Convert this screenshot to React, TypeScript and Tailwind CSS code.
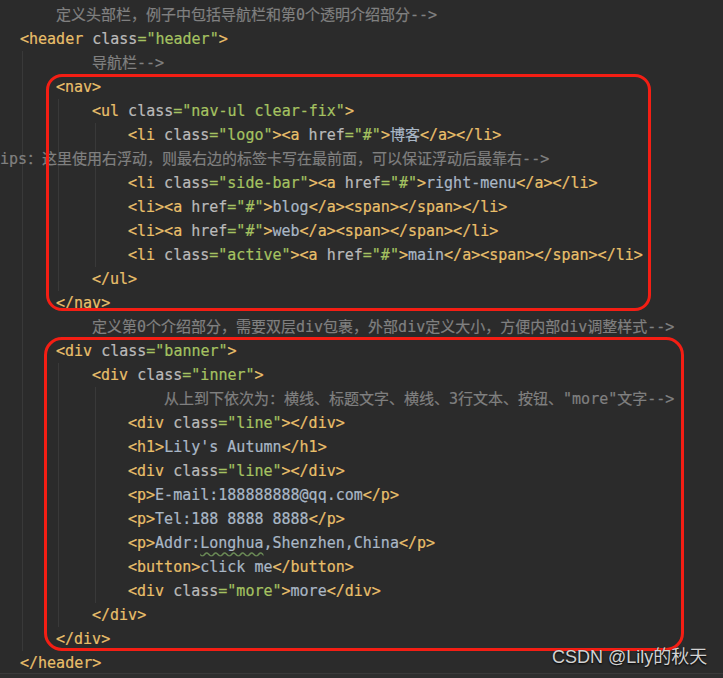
import { ReactNode } from "react";

type Tok = [string, string];

const tokClass: Record<string, string> = {
  t: "text-[#e8bf6a]",
  a: "text-[#bababa]",
  v: "text-[#a5c261]",
  x: "text-[#a9b7c6]",
  c: "text-[#808080]",
  w: "text-[#a9b7c6] underline decoration-wavy decoration-[#6a8a55] underline-offset-[3px]",
};

// one editor row; pad is the left padding inside the current guide block
const L = ({ pad, toks }: { pad: string; toks: Tok[] }) => (
  <div className={`h-[24px] leading-[24px] whitespace-pre ${pad}`}>
    {toks.map(([kind, text], i) => (
      <span key={i} className={tokClass[kind]}>
        {text}
      </span>
    ))}
  </div>
);

// indent guide: a block whose left border is the guide line
const Guide = ({ ml, children }: { ml: string; children: ReactNode }) => (
  <div className={`flex flex-col border-l border-[#393939] ${ml}`}>{children}</div>
);

const liLink = (cls: string | null, text: string, tail: string): Tok[] => [
  ...(cls ? ([["t", "<li"], ["a", " class"], ["v", `="${cls}"`], ["t", "><a"]] as Tok[]) : ([["t", "<li><a"]] as Tok[])),
  ["a", " href"],
  ["v", '="#"'],
  ["t", ">"],
  ["x", text],
  ["t", tail],
];

const divClass = (cls: string, tail: string): Tok[] => [
  ["t", "<div"],
  ["a", " class"],
  ["v", `="${cls}"`],
  ["t", tail],
];

export default function App() {
  return (
    <div className="w-[723px] h-[678px] flex flex-col bg-[#2b2b2b] overflow-hidden">
      <div className="relative h-[673px] overflow-hidden pt-[3px] font-['DejaVu_Sans_Mono','Noto_Sans_CJK_SC',monospace] text-[15px] [-webkit-text-stroke:0.2px]">
        <L pad="pl-[56px]" toks={[["c", "定义头部栏，例子中包括导航栏和第0个透明介绍部分-->"]]} />
        <L pad="pl-[20px]" toks={[["t", "<header"], ["a", " class"], ["v", '="header"'], ["t", ">"]]} />
        <Guide ml="ml-[22px]">
          <L pad="pl-[69px]" toks={[["c", "导航栏-->"]]} />
          <L pad="pl-[33px]" toks={[["t", "<nav>"]]} />
          <Guide ml="ml-[35px]">
            <L pad="pl-[33px]" toks={[["t", "<ul"], ["a", " class"], ["v", '="nav-ul clear-fix"'], ["t", ">"]]} />
            <Guide ml="ml-[36px]">
              <L pad="pl-[32px]" toks={liLink("logo", "博客", "</a></li>")} />
              <div className="relative -ml-[96px]">
                <L pad="pl-0" toks={[["c", "ips：这里使用右浮动，则最右边的标签卡写在最前面，可以保证浮动后最靠右-->"]]} />
              </div>
              <L pad="pl-[32px]" toks={liLink("side-bar", "right-menu", "</a></li>")} />
              <L pad="pl-[32px]" toks={liLink(null, "blog", "</a><span></span></li>")} />
              <L pad="pl-[32px]" toks={liLink(null, "web", "</a><span></span></li>")} />
              <L pad="pl-[32px]" toks={liLink("active", "main", "</a><span></span></li>")} />
            </Guide>
            <L pad="pl-[33px]" toks={[["t", "</ul>"]]} />
          </Guide>
          <L pad="pl-[33px]" toks={[["t", "</nav>"]]} />
          <L pad="pl-[69px]" toks={[["c", "定义第0个介绍部分，需要双层div包裹，外部div定义大小，方便内部div调整样式-->"]]} />
          <L pad="pl-[33px]" toks={divClass("banner", ">")} />
          <Guide ml="ml-[35px]">
            <L pad="pl-[33px]" toks={divClass("inner", ">")} />
            <Guide ml="ml-[36px]">
              <L pad="pl-[68px]" toks={[["c", '从上到下依次为：横线、标题文字、横线、3行文本、按钮、"more"文字-->']]} />
              <L pad="pl-[32px]" toks={divClass("line", "></div>")} />
              <L pad="pl-[32px]" toks={[["t", "<h1>"], ["x", "Lily's Autumn"], ["t", "</h1>"]]} />
              <L pad="pl-[32px]" toks={divClass("line", "></div>")} />
              <L pad="pl-[32px]" toks={[["t", "<p>"], ["x", "E-mail:188888888@qq.com"], ["t", "</p>"]]} />
              <L pad="pl-[32px]" toks={[["t", "<p>"], ["x", "Tel:188 8888 8888"], ["t", "</p>"]]} />
              <L
                pad="pl-[32px]"
                toks={[["t", "<p>"], ["x", "Addr:"], ["w", "Longhua"], ["x", ",Shenzhen,China"], ["t", "</p>"]]}
              />
              <L pad="pl-[32px]" toks={[["t", "<button>"], ["x", "click me"], ["t", "</button>"]]} />
              <L pad="pl-[32px]" toks={[...divClass("more", ">"), ["x", "more"], ["t", "</div>"]]} />
            </Guide>
            <L pad="pl-[33px]" toks={[["t", "</div>"]]} />
          </Guide>
          <L pad="pl-[33px]" toks={[["t", "</div>"]]} />
        </Guide>
        <L pad="pl-[20px]" toks={[["t", "</header>"]]} />

        {/* hand drawn highlight boxes over the code */}
        <div className="absolute left-[46px] top-[74px] w-[605px] h-[237px] border-[3px] border-[#f41e14] rounded-[16px]" />
        <div className="absolute left-[44px] top-[337px] w-[640px] h-[314px] border-[3px] border-[#f41e14] rounded-[18px]" />

        <div className="absolute left-[552px] top-[647px] leading-[20px] text-[18px] text-[#d2d2d2] font-['Liberation_Sans','Noto_Sans_CJK_SC',sans-serif] [-webkit-text-stroke:0px] [text-shadow:0_1px_2px_#000]">
          CSDN @Lily的秋天
        </div>
      </div>
      <div className="flex-1 border-t border-[#3a3a3a] bg-[#2e2e2e]" />
    </div>
  );
}
